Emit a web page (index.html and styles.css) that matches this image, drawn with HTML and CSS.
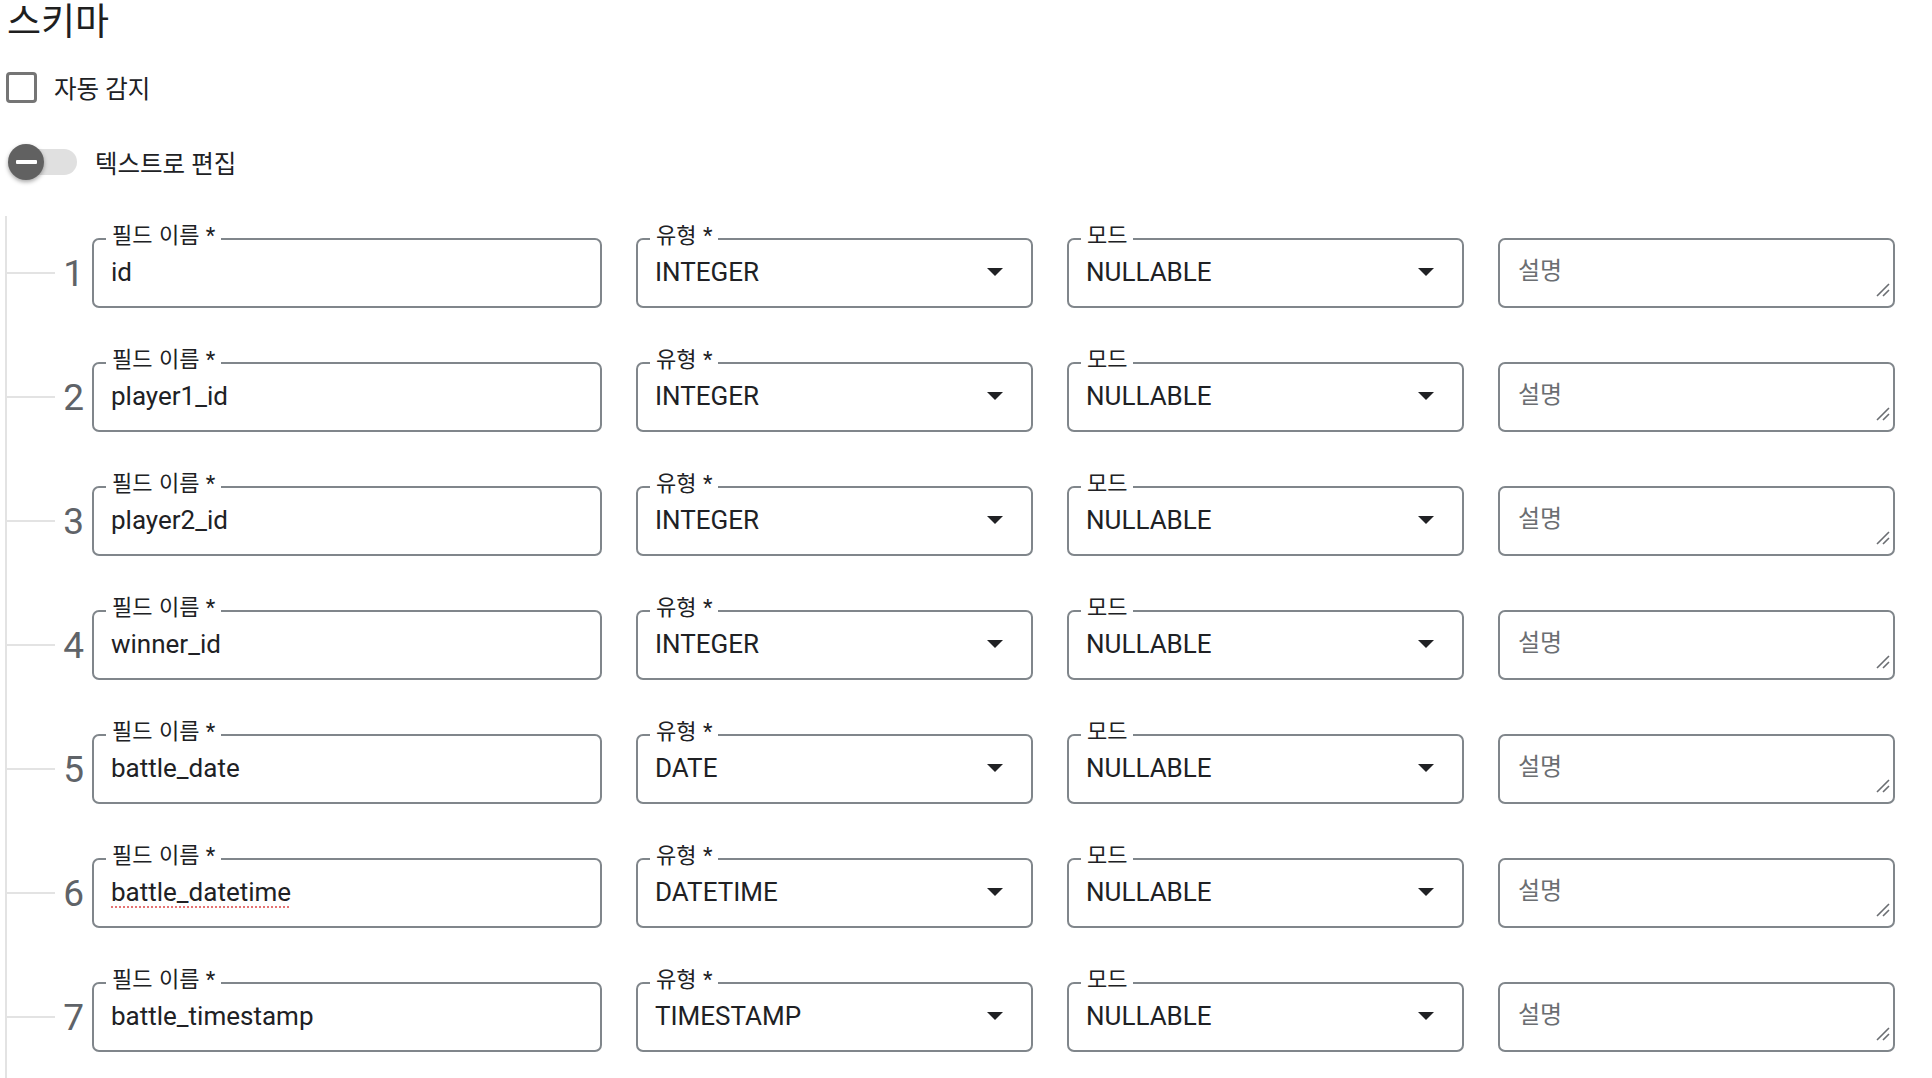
FILE: index.html
```html
<!DOCTYPE html>
<html lang="ko">
<head>
<meta charset="utf-8">
<title>스키마</title>
<link rel="stylesheet" href="styles.css">
</head>
<body>
<div class="page">
  <h1 class="title">스키마</h1>

  <label class="check-row">
    <span class="checkbox"></span>
    <span class="check-label">자동 감지</span>
  </label>

  <div class="toggle-row">
    <span class="switch">
      <span class="track"></span>
      <span class="thumb"><span class="minus"></span></span>
    </span>
    <span class="toggle-label">텍스트로 편집</span>
  </div>

  <div class="tree">
    <div class="row">
      <span class="tick"></span><span class="num">1</span>
      <div class="fields">
        <div class="field"><span class="flabel">필드 이름 *</span><span class="value">id</span></div>
        <div class="field select"><span class="flabel">유형 *</span><span class="value">INTEGER</span><span class="arrow"></span></div>
        <div class="field select"><span class="flabel">모드</span><span class="value">NULLABLE</span><span class="arrow"></span></div>
        <div class="field desc"><textarea placeholder="설명"></textarea><svg class="grip" viewBox="0 0 16 16"><path d="M2 14L14 2M8 14L14 8"/></svg></div>
      </div>
    </div>
    <div class="row">
      <span class="tick"></span><span class="num">2</span>
      <div class="fields">
        <div class="field"><span class="flabel">필드 이름 *</span><span class="value">player1_id</span></div>
        <div class="field select"><span class="flabel">유형 *</span><span class="value">INTEGER</span><span class="arrow"></span></div>
        <div class="field select"><span class="flabel">모드</span><span class="value">NULLABLE</span><span class="arrow"></span></div>
        <div class="field desc"><textarea placeholder="설명"></textarea><svg class="grip" viewBox="0 0 16 16"><path d="M2 14L14 2M8 14L14 8"/></svg></div>
      </div>
    </div>
    <div class="row">
      <span class="tick"></span><span class="num">3</span>
      <div class="fields">
        <div class="field"><span class="flabel">필드 이름 *</span><span class="value">player2_id</span></div>
        <div class="field select"><span class="flabel">유형 *</span><span class="value">INTEGER</span><span class="arrow"></span></div>
        <div class="field select"><span class="flabel">모드</span><span class="value">NULLABLE</span><span class="arrow"></span></div>
        <div class="field desc"><textarea placeholder="설명"></textarea><svg class="grip" viewBox="0 0 16 16"><path d="M2 14L14 2M8 14L14 8"/></svg></div>
      </div>
    </div>
    <div class="row">
      <span class="tick"></span><span class="num">4</span>
      <div class="fields">
        <div class="field"><span class="flabel">필드 이름 *</span><span class="value">winner_id</span></div>
        <div class="field select"><span class="flabel">유형 *</span><span class="value">INTEGER</span><span class="arrow"></span></div>
        <div class="field select"><span class="flabel">모드</span><span class="value">NULLABLE</span><span class="arrow"></span></div>
        <div class="field desc"><textarea placeholder="설명"></textarea><svg class="grip" viewBox="0 0 16 16"><path d="M2 14L14 2M8 14L14 8"/></svg></div>
      </div>
    </div>
    <div class="row">
      <span class="tick"></span><span class="num">5</span>
      <div class="fields">
        <div class="field"><span class="flabel">필드 이름 *</span><span class="value">battle_date</span></div>
        <div class="field select"><span class="flabel">유형 *</span><span class="value">DATE</span><span class="arrow"></span></div>
        <div class="field select"><span class="flabel">모드</span><span class="value">NULLABLE</span><span class="arrow"></span></div>
        <div class="field desc"><textarea placeholder="설명"></textarea><svg class="grip" viewBox="0 0 16 16"><path d="M2 14L14 2M8 14L14 8"/></svg></div>
      </div>
    </div>
    <div class="row">
      <span class="tick"></span><span class="num">6</span>
      <div class="fields">
        <div class="field"><span class="flabel">필드 이름 *</span><span class="value"><span class="spell">battle_datetime</span></span></div>
        <div class="field select"><span class="flabel">유형 *</span><span class="value">DATETIME</span><span class="arrow"></span></div>
        <div class="field select"><span class="flabel">모드</span><span class="value">NULLABLE</span><span class="arrow"></span></div>
        <div class="field desc"><textarea placeholder="설명"></textarea><svg class="grip" viewBox="0 0 16 16"><path d="M2 14L14 2M8 14L14 8"/></svg></div>
      </div>
    </div>
    <div class="row">
      <span class="tick"></span><span class="num">7</span>
      <div class="fields">
        <div class="field"><span class="flabel">필드 이름 *</span><span class="value">battle_timestamp</span></div>
        <div class="field select"><span class="flabel">유형 *</span><span class="value">TIMESTAMP</span><span class="arrow"></span></div>
        <div class="field select"><span class="flabel">모드</span><span class="value">NULLABLE</span><span class="arrow"></span></div>
        <div class="field desc"><textarea placeholder="설명"></textarea><svg class="grip" viewBox="0 0 16 16"><path d="M2 14L14 2M8 14L14 8"/></svg></div>
      </div>
    </div>
  </div>
</div>
</body>
</html>
```

FILE: styles.css
```css
html, body {
  margin: 0;
  padding: 0;
  background: #ffffff;
  overflow: hidden;
}

body {
  font-family: "Roboto", "Noto Sans CJK KR", sans-serif;
  color: #202124;
}

.page {
  padding-left: 6px;
}

.title {
  margin: 0;
  padding-top: 2px;
  padding-left: 1px;
  font-size: 37px;
  font-weight: 400;
  line-height: 42px;
  height: 42px;
  color: #1f1f1f;
}

.check-row {
  display: flex;
  align-items: center;
  height: 31px;
  margin-top: 28px;
}

.checkbox {
  width: 31px;
  height: 31px;
  box-sizing: border-box;
  border: 3px solid #757575;
  border-radius: 4px;
}

.check-label {
  margin-left: 17px;
  font-size: 24.5px;
  color: #202124;
}

.toggle-row {
  display: flex;
  align-items: center;
  height: 40px;
  margin-top: 39px;
}

.switch {
  position: relative;
  width: 71px;
  height: 40px;
  display: flex;
  align-items: center;
}

.track {
  margin-left: 8px;
  width: 63px;
  height: 26px;
  border-radius: 13px;
  background: #e0e0e0;
}

.thumb {
  position: absolute;
  left: 2px;
  top: 2px;
  width: 36px;
  height: 36px;
  border-radius: 50%;
  background: #616161;
  box-shadow: 0 2px 4px rgba(0, 0, 0, 0.35);
  display: flex;
  align-items: center;
  justify-content: center;
}

.minus {
  width: 21px;
  height: 4px;
  background: #ffffff;
  border-radius: 1px;
}

.toggle-label {
  margin-left: 18px;
  font-size: 24.5px;
  color: #202124;
}

.tree {
  margin-top: 34px;
  margin-left: -1px;
  border-left: 2px solid #e3e3e3;
  padding-top: 22px;
  padding-bottom: 26px;
  display: flex;
  flex-direction: column;
  gap: 54px;
}

.row {
  display: flex;
  align-items: center;
  height: 70px;
}

.tick {
  width: 48px;
  height: 2px;
  background: #e3e3e3;
  flex: none;
}

.num {
  width: 37px;
  flex: none;
  box-sizing: border-box;
  padding-right: 8px;
  text-align: right;
  font-size: 37px;
  line-height: 1;
  color: #5f6368;
}

.fields {
  display: grid;
  grid-template-columns: 510px 397px 397px 397px;
  column-gap: 34px;
}

.field {
  position: relative;
  height: 70px;
  box-sizing: border-box;
  border: 2px solid #80868b;
  border-radius: 7px;
  display: flex;
  align-items: center;
  padding: 0 16px 2px 17px;
}

.flabel {
  position: absolute;
  top: -15px;
  left: 12px;
  padding: 0 6px;
  background: #ffffff;
  font-size: 22px;
  line-height: 22px;
  word-spacing: 1px;
  color: #202124;
}

.value {
  flex: 1;
  font-size: 26px;
  line-height: 30px;
  color: #202124;
  white-space: nowrap;
}

.spell {
  text-decoration: underline dotted #e57373;
  text-decoration-thickness: 2px;
  text-underline-offset: 5px;
}

.arrow {
  flex: none;
  width: 0;
  height: 0;
  border-left: 8px solid transparent;
  border-right: 8px solid transparent;
  border-top: 8px solid #202124;
  margin-right: 12px;
}

.desc {
  display: block;
  padding: 16px 1px 9px 18px;
}

.desc textarea {
  display: block;
  width: 100%;
  height: 41px;
  box-sizing: border-box;
  border: none;
  outline: none;
  padding: 0;
  margin: 0;
  resize: none;
  font-family: "Roboto", "Noto Sans CJK KR", sans-serif;
  font-size: 24px;
  line-height: 30px;
  color: #202124;
  background: transparent;
}

.desc textarea::placeholder {
  color: #6b6e72;
}

.grip {
  position: absolute;
  right: 2px;
  bottom: 8px;
  width: 16px;
  height: 16px;
  fill: none;
  stroke: #6b6e72;
  stroke-width: 1.6;
}
```
